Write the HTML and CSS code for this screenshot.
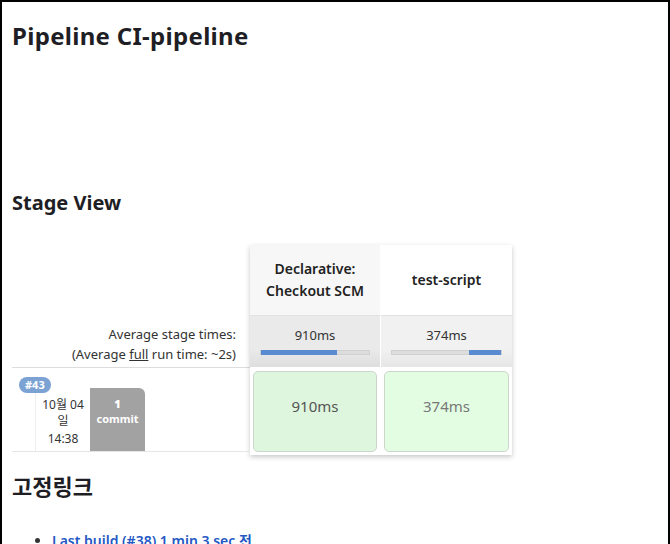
FILE: index.html
```html
<!DOCTYPE html>
<html lang="ko">
<head>
    <meta charset="UTF-8">
    <meta name="viewport" content="width=device-width, initial-scale=1.0">
    <title>CI-pipeline [Jenkins]</title>
    <link rel="stylesheet" href="styles.css">
</head>
<body>
    <div class="frame">
        <h1 class="job-name">Pipeline CI-pipeline</h1>

        <h2 class="section-title">Stage View</h2>

        <div class="stage-view">
            <div class="labels">
                <div class="label-head"></div>
                <div class="label-avg">
                    <span>Average stage times:</span>
                    <span>(Average <u>full</u> run time: ~2s)</span>
                </div>
                <div class="build-row">
                    <span class="badge">#43</span>
                    <div class="build-date">
                        <span>10월 04<br>일</span>
                        <span class="time">14:38</span>
                    </div>
                    <div class="changeset">
                        <strong>1</strong>
                        <span>commit</span>
                    </div>
                </div>
            </div>

            <div class="stages">
                <div class="stage">
                    <div class="stage-head head-grey">Declarative:<br>Checkout SCM</div>
                    <div class="stage-avg avg-dark">
                        <span>910ms</span>
                        <div class="bar"><div class="fill" style="width: 70%"></div></div>
                    </div>
                    <div class="stage-cell">
                        <div class="success-box">910ms</div>
                    </div>
                </div>
                <div class="stage">
                    <div class="stage-head">test-script</div>
                    <div class="stage-avg">
                        <span>374ms</span>
                        <div class="bar bar-right"><div class="fill" style="width: 29%"></div></div>
                    </div>
                    <div class="stage-cell">
                        <div class="success-box light">374ms</div>
                    </div>
                </div>
            </div>
        </div>

        <h2 class="section-title links-title">고정링크</h2>
        <ul class="permalinks">
            <li><a href="#">Last build (#38) 1 min 3 sec 전</a></li>
        </ul>
    </div>
</body>
</html>
```

FILE: styles.css
```css
* {
    margin: 0;
    padding: 0;
    box-sizing: border-box;
}

html, body {
    height: 100%;
}

body {
    font-family: 'Noto Sans', 'Noto Sans CJK KR', sans-serif;
    color: #333;
    background: #fff;
}

.frame {
    height: 100%;
    border: 2px solid #000;
    border-bottom: none;
    padding: 0 10px;
    overflow: hidden;
}

.job-name {
    font-size: 24px;
    line-height: 32px;
    font-weight: 700;
    letter-spacing: 0.3px;
    color: #1e1e24;
    margin-top: 18px;
}

.section-title {
    font-size: 20px;
    line-height: 28px;
    font-weight: 700;
    color: #1e1e24;
    margin-top: 137px;
}

.stage-view {
    display: flex;
    margin-top: 28px;
}

/* left column: labels and build summary */
.labels {
    width: 238px;
}

.label-head {
    height: 71px;
}

.label-avg {
    height: 52px;
    padding: 5px 14px 0 0;
    border-bottom: 1px solid #ddd;
    display: flex;
    flex-direction: column;
    justify-content: center;
    align-items: flex-end;
    font-size: 13px;
    line-height: 20px;
    color: #333;
}

.build-row {
    position: relative;
    height: 84px;
    padding: 20px 0 0 23px;
    border-bottom: 1px solid #e6e6e6;
    display: flex;
}

.badge {
    position: absolute;
    top: 9px;
    left: 7px;
    background: #7ba2d3;
    color: #fff;
    font-size: 11px;
    font-weight: 700;
    line-height: 16px;
    padding: 0 6px;
    border-radius: 8px;
}

.build-date {
    width: 55px;
    border-left: 1px solid #eee;
    display: flex;
    flex-direction: column;
    justify-content: space-between;
    align-items: center;
    text-align: center;
    font-size: 12px;
    line-height: 16px;
    color: #333;
    padding: 9px 0 4px;
}

.changeset {
    width: 55px;
    background: #a2a2a2;
    border-radius: 0 6px 0 0;
    color: #fff;
    font-size: 11px;
    font-weight: 700;
    line-height: 15px;
    display: flex;
    flex-direction: column;
    align-items: center;
    padding-top: 8px;
}

/* stage columns */
.stages {
    display: flex;
    gap: 1px;
    background: #fff;
    box-shadow: 0 2px 5px rgba(0, 0, 0, 0.22);
}

.stage {
    width: 130px;
}

.stage + .stage {
    width: 131px;
}

.stage-head {
    height: 71px;
    display: flex;
    align-items: center;
    justify-content: center;
    text-align: center;
    font-size: 14px;
    font-weight: 600;
    line-height: 22px;
    color: #222;
    border-bottom: 1px solid #e2e2e2;
}

.head-grey {
    background: #f7f7f7;
}

.stage-avg {
    height: 51px;
    padding: 9px 7px 0;
    text-align: center;
    font-size: 13px;
    line-height: 20px;
    color: #333;
    background: linear-gradient(#f1f1f1 65%, #e6e6e6);
}

.avg-dark {
    background: linear-gradient(#eaeaea 65%, #dedede);
}

.bar {
    height: 5px;
    margin: 5px 3px 0;
    background: #ddd;
    border: 1px solid #d0d0d0;
    display: flex;
}

.bar-right {
    justify-content: flex-end;
}

.fill {
    background: #5a8ad0;
    margin: -1px 0;
    height: 5px;
}

.stage-cell {
    height: 88px;
    padding: 4px 3px;
}

.success-box {
    height: 81px;
    padding-bottom: 12px;
    border: 1px solid #ccd6cc;
    border-radius: 5px;
    background: #ddf6dd;
    display: flex;
    align-items: center;
    justify-content: center;
    font-size: 15px;
    color: #555;
}

.success-box.light {
    background: #e3fde3;
    color: #777;
}

.links-title {
    margin-top: 15px;
    font-size: 22px;
    line-height: 30px;
    font-family: 'Noto Sans CJK KR', sans-serif;
}

.permalinks {
    margin: 30px 0 0 40px;
    font-size: 14px;
}

.permalinks a {
    color: #2458c4;
    font-weight: 600;
}
```
